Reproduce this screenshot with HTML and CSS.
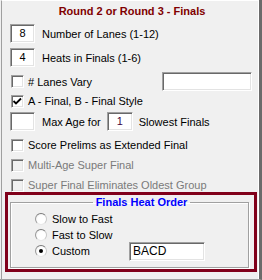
FILE: index.html
```html
<!DOCTYPE html>
<html>
<head>
<meta charset="utf-8">
<link rel="stylesheet" href="styles.css">
</head>
<body>
<div class="frame">
  <div class="panel">
    <div class="title">Round 2 or Round 3 - Finals</div>

    <div class="row r1">
      <div class="tbox num">8</div>
      <span class="lbl">Number of Lanes (1-12)</span>
    </div>
    <div class="row r2">
      <div class="tbox num">4</div>
      <span class="lbl">Heats in Finals (1-6)</span>
    </div>
    <div class="row r3">
      <span class="cb"></span>
      <span class="clbl">&#35; Lanes Vary</span>
      <div class="tbox wide"></div>
    </div>
    <div class="row r4">
      <span class="cb checked"><svg width="11" height="11" viewBox="0 0 11 11"><path d="M1.5 5 L4 7.5 L9 2.5" fill="none" stroke="#000" stroke-width="1.8"/></svg></span>
      <span class="clbl">A - Final, B - Final Style</span>
    </div>
    <div class="row r5">
      <div class="tbox num"></div>
      <span class="lbl">Max Age for</span>
      <div class="tbox age">1</div>
      <span class="lbl2">Slowest Finals</span>
    </div>
    <div class="row r6">
      <span class="cb"></span>
      <span class="clbl">Score Prelims as Extended Final</span>
    </div>
    <div class="row r7 disabled">
      <span class="cb"></span>
      <span class="clbl">Multi-Age Super Final</span>
    </div>
    <div class="row r8 disabled">
      <span class="cb"></span>
      <span class="clbl">Super Final Eliminates Oldest Group</span>
    </div>

    <div class="redbox">
      <fieldset class="group">
        <legend>Finals Heat Order</legend>
        <div class="rrow"><span class="radio"></span><span class="rlbl">Slow to Fast</span></div>
        <div class="rrow"><span class="radio"></span><span class="rlbl">Fast to Slow</span></div>
        <div class="rrow"><span class="radio on"></span><span class="rlbl">Custom</span><div class="tbox custom">BACD</div></div>
      </fieldset>
    </div>
  </div>
</div>
</body>
</html>
```

FILE: styles.css
```css
html, body {
  margin: 0;
  padding: 0;
  background: #f0f0f0;
}
body {
  font-family: "Liberation Sans", Arial, sans-serif;
  font-size: 11px;
  color: #000;
}
.frame {
  width: 262px;
  height: 280px;
  box-sizing: border-box;
  padding-left: 1px;
  border-right: 3px solid #6b6b6b;
  border-bottom: 1px solid #a0a0a0;
  background: #f0f0f0;
}
.panel {
  height: 100%;
  box-sizing: border-box;
  border-left: 1px solid #a0a0a0;
  border-top: 1px solid #ffffff;
  border-right: 1px solid #ffffff;
  padding-left: 8px;
}
.title {
  height: 20px;
  line-height: 20px;
  text-align: center;
  font-weight: bold;
  color: #800000;
  padding-left: 2px;
  padding-right: 6px;
}
.row {
  display: flex;
  align-items: center;
  height: 16px;
}
.r1 { margin-top: 3px; height: 19px; }
.r2 { margin-top: 5px; height: 19px; }
.r3 { margin-top: 5px; height: 19px; }
.r4 { margin-top: 2px; }
.r5 { margin-top: 3px; height: 19px; }
.r6 { margin-top: 6px; }
.r7 { margin-top: 4px; }
.r8 { margin-top: 4px; }

.tbox {
  box-sizing: border-box;
  height: 19px;
  background: #fff;
  border-style: solid;
  border-width: 1px;
  border-color: #a0a0a0 #ffffff #ffffff #a0a0a0;
  box-shadow: inset 1px 1px 0 #696969, inset -1px -1px 0 #e3e3e3;
  line-height: 17px;
}
.num {
  width: 25px;
  text-align: center;
}
.lbl { margin-left: 7px; }
.age {
  width: 26px;
  margin-left: 6px;
  text-align: center;
  color: #400040;
}
.lbl2 { margin-left: 6px; }
.wide {
  width: 90px;
  margin-left: auto;
  margin-right: 6px;
}
.cb {
  box-sizing: border-box;
  width: 13px;
  height: 13px;
  margin-left: 1px;
  background: #fff;
  border-style: solid;
  border-width: 1px;
  border-color: #a0a0a0 #ffffff #ffffff #a0a0a0;
  box-shadow: inset 1px 1px 0 #696969, inset -1px -1px 0 #e3e3e3;
  display: flex;
  align-items: center;
  justify-content: center;
  flex: none;
}
.cb svg { display: block; }
.clbl { margin-left: 4px; }
.disabled .clbl { color: #7a7a7a; }
.disabled .cb {
  background: #f0f0f0;
}

.redbox {
  margin-top: -1px;
  margin-left: -5px;
  width: 252px;
  height: 80px;
  box-sizing: border-box;
  border: 3px solid #80001a;
  padding: 0 5px 1px 2px;
}
.group {
  margin: 0;
  padding: 2px 0 0 24px;
  height: 73px;
  box-sizing: border-box;
  border: 1px solid #a0a0a0;
  box-shadow: 1px 1px 0 #fff, inset 1px 1px 0 #fff;
}
.group legend {
  margin: 0 auto;
  padding: 0 3px;
  font-weight: bold;
  color: #0000ff;
  line-height: 14px;
}
.rrow {
  display: flex;
  align-items: center;
  height: 16px;
}
.radio {
  box-sizing: border-box;
  width: 12px;
  height: 12px;
  border-radius: 50%;
  border: 1px solid #8a8a8a;
  border-color: #7a7a7a #c8c8c8 #e8e8e8 #9a9a9a;
  background: radial-gradient(circle at 60% 60%, #ffffff 50%, #e4e4e4 100%);
  position: relative;
  flex: none;
}
.radio.on::after {
  content: "";
  position: absolute;
  left: 3px;
  top: 3px;
  width: 4px;
  height: 4px;
  border-radius: 50%;
  background: #000;
}
.rlbl {
  margin-left: 5px;
  width: 77px;
}
.custom {
  width: 76px;
  padding-left: 3px;
  font-size: 12px;
  flex: none;
}
```
